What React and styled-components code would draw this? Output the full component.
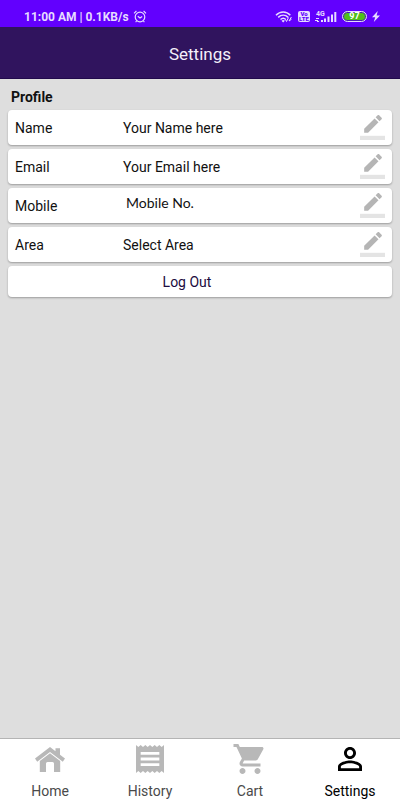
import React from "react";
import styled, { createGlobalStyle } from "styled-components";

const GlobalStyle = createGlobalStyle`
  * {
    box-sizing: border-box;
  }

  body {
    margin: 0;
    background-color: #dedede;
    color: #111111;
    font-family: Roboto, "Liberation Sans", sans-serif;
  }
`;

const Screen = styled.div`
  display: flex;
  flex-direction: column;
  min-height: 100vh;
`;

const StatusBar = styled.div`
  display: flex;
  justify-content: space-between;
  align-items: center;
  height: 27px;
  padding: 6px 20px 0 24px;
  background-color: #6200fe;
  color: #e6dcff;
`;

const StatusGroup = styled.div`
  display: flex;
  align-items: center;
  gap: ${(props) => props.$gap}px;
`;

const Clock = styled.span`
  font-size: 12px;
  font-weight: 700;
  line-height: 16px;
  white-space: pre;
`;

const VolteBadge = styled.span`
  width: 12px;
  height: 11px;
  border-radius: 2px;
  background-color: #e6dcff;
  color: #6200fe;
  font-size: 6px;
  font-weight: 900;
  line-height: 5px;
  text-align: center;
`;

const Battery = styled.span`
  width: 25px;
  height: 11px;
  border: 1px solid #e6dcff;
  border-radius: 6px;
  background-color: #4fbf1a;
  box-shadow: inset 0 0 0 1px #4a1fb0;
  color: #ffffff;
  font-size: 9px;
  font-weight: 700;
  line-height: 9px;
  text-align: center;
`;

const Header = styled.header`
  display: flex;
  align-items: center;
  justify-content: center;
  height: 52px;
  padding-top: 2px;
  background-color: #30145e;
  border-bottom: 1px solid #210a4c;
`;

const Title = styled.h1`
  margin: 0;
  color: #f4f0fa;
  font-size: 17px;
  font-weight: 400;
  line-height: 24px;
`;

const Content = styled.main`
  display: flex;
  flex: 1;
  flex-direction: column;
  gap: 4px;
  padding: 10px 8px;
`;

const SectionTitle = styled.h2`
  margin: 0;
  padding-left: 3px;
  font-size: 14px;
  font-weight: 700;
  line-height: 17px;
`;

const Card = styled.div`
  display: grid;
  grid-template-columns: 108px 1fr 25px;
  align-items: center;
  height: 35px;
  padding: 0 7px;
  border-radius: 4px;
  background-color: #ffffff;
  box-shadow: 0 1px 2px rgba(0, 0, 0, 0.3);
  font-size: 14px;
  line-height: 20px;
`;

const PhoneValue = styled.span`
  align-self: start;
  padding: 5px 3px;
  font-family: Lato, Roboto, sans-serif;
`;

const EditButton = styled.button`
  display: flex;
  padding: 0;
  border: 0;
  background: none;
  color: #b5b5b5;
`;

const LogOutButton = styled.button`
  height: 31px;
  padding: 0 26px 0 0;
  border: 0;
  border-radius: 4px;
  background-color: #ffffff;
  box-shadow: 0 1px 2px rgba(0, 0, 0, 0.3);
  color: #1c0c40;
  font-family: inherit;
  font-size: 14px;
  line-height: 20px;
`;

const BottomNav = styled.nav`
  display: grid;
  grid-template-columns: repeat(4, 1fr);
  height: 62px;
  border-top: 1px solid #b4b4b4;
  background-color: #ffffff;
`;

const NavLink = styled.a`
  display: flex;
  flex-direction: column;
  align-items: center;
  gap: 4px;
  padding-top: 2px;
  color: ${(props) => (props.$active ? "#000000" : "#4a4a4a")};
  font-size: 14px;
  line-height: 20px;
  text-decoration: none;
`;

const NavIcon = styled.span`
  display: flex;
  align-items: center;
  justify-content: center;
  height: 36px;
  color: ${(props) => (props.$active ? "#000000" : "#b8b8b8")};
`;

function AlarmIcon() {
  return (
    <svg width="14" height="13" viewBox="0 0 14 13" fill="none" stroke="currentColor">
      <circle cx="7" cy="7" r="4.8" strokeWidth="1.2" />
      <path d="M4.8 6.2L7 8l2.2-1.5M1 3.4L3.4 1M13 3.4L10.6 1M3.6 11l-1 1.2M10.4 11l1 1.2" strokeWidth="1.1" />
    </svg>
  );
}

function WifiIcon() {
  return (
    <svg width="18" height="12" viewBox="0 0 18 12" fill="none" stroke="currentColor">
      <path d="M1 4.3C5-.2 11.5-.2 15.3 4.3M3.2 6.4c3-3 7-3 10 0M5.5 8.5c1.7-1.6 3.7-1.6 5.3 0" strokeWidth="1.5" />
      <path d="M6.5 9.7Q8.2 8.3 9.9 9.7L8.2 11.4z" fill="currentColor" stroke="none" />
      <path d="M11.5 10.5l2-4M11.5 10.5l-1-2M14 10l2.4-4M14 10l2.5-1.8" strokeWidth="1" />
    </svg>
  );
}

const Signal = styled.svg`
  font-size: 7px;
  font-weight: 700;
`;

function SignalIcon() {
  return (
    <Signal width="22" height="13" viewBox="0 0 22 13" fill="currentColor">
      <text x="1" y="6">4G</text>
      <path d="M1 8h3v1H1zM0 10h3v1H0zM2 11h2v1H2zM6 10h2v2H6zM9 8.5h2V12H9zM12.5 6.5h2V12h-2zM16 4.5h2V12h-2zM19.3 2h2v10h-2z" />
    </Signal>
  );
}

function BoltIcon() {
  return (
    <svg width="8" height="11" viewBox="0 0 8 11" fill="currentColor">
      <path d="M5.8 0L0 6.3h3.2L1.8 11 8 4.4H4.6z" />
    </svg>
  );
}

function PencilIcon() {
  return (
    <svg width="25" height="25" viewBox="0 0 24 24" fill="currentColor">
      <path d="M17.75 7L14 3.25l-10 10V17h3.75l10-10zm2.96-2.96c.39-.39.39-1.02 0-1.41L18.37.29c-.39-.39-1.02-.39-1.41 0L15 2.25 18.75 6l1.96-1.96z" />
      <path fillOpacity=".36" d="M0 20h24v4H0z" />
    </svg>
  );
}

function HomeIcon() {
  return (
    <svg width="30" height="25" viewBox="0 0 30 25" fill="currentColor">
      <path d="M15 0L0 11.6l2.2 3.2L15 5l12.800 9.800 2.200-3.200-5-3.900V1.200h-4.500v3z" />
      <path d="M15 6.200L4.800 14V25h6.200v-8.500q0-1.500 1.500-1.500h5q1.500 0 1.500 1.500V25h6.200V14z" />
    </svg>
  );
}

function ReceiptIcon() {
  return (
    <svg width="28" height="28" viewBox="3 2 18 20" preserveAspectRatio="none" fill="currentColor">
      <path d="M18 17H6v-2h12v2zm0-4H6v-2h12v2zm0-4H6V7h12v2zM3 22l1.5-1.5L6 22l1.5-1.5L9 22l1.5-1.5L12 22l1.5-1.5L15 22l1.5-1.5L18 22l1.5-1.5L21 22V2l-1.5 1.5L18 2l-1.5 1.5L15 2l-1.5 1.5L12 2l-1.5 1.5L9 2 7.5 3.5 6 2 4.5 3.5 3 2v20z" />
    </svg>
  );
}

function CartIcon() {
  return (
    <svg width="36" height="36" viewBox="0 0 24 24" fill="currentColor">
      <path d="M7 18c-1.1 0-1.99.9-1.99 2S5.9 22 7 22s2-.9 2-2-.9-2-2-2zM1 2v2h2l3.6 7.59-1.35 2.45c-.16.28-.25.61-.25.96 0 1.1.9 2 2 2h12v-2H7.42c-.14 0-.25-.11-.25-.25l.03-.12.9-1.63h7.45c.75 0 1.41-.41 1.75-1.03l3.58-6.49c.08-.14.12-.31.12-.48 0-.55-.45-1-1-1H5.21l-.94-2H1zm16 16c-1.1 0-1.99.9-1.99 2s.89 2 1.99 2 2-.9 2-2-.9-2-2-2z" />
    </svg>
  );
}

function PersonIcon() {
  return (
    <svg width="36" height="36" viewBox="0 0 24 24" fill="currentColor">
      <path d="M12 5.9c1.16 0 2.1.94 2.1 2.1s-.94 2.1-2.1 2.1S9.9 9.16 9.9 8s.94-2.1 2.1-2.1m0 9c2.97 0 6.1 1.46 6.1 2.1v1.1H5.9V17c0-.64 3.13-2.1 6.1-2.1M12 4C9.79 4 8 5.79 8 8s1.79 4 4 4 4-1.79 4-4-1.79-4-4-4zm0 9c-2.67 0-8 1.34-8 4v3h16v-3c0-2.66-5.33-4-8-4z" />
    </svg>
  );
}

const fields = [
  { label: "Name", value: "Your Name here" },
  { label: "Email", value: "Your Email here" },
  { label: "Mobile", value: "Mobile No.", phone: true },
  { label: "Area", value: "Select Area" },
];

const tabs = [
  { label: "Home", icon: HomeIcon },
  { label: "History", icon: ReceiptIcon },
  { label: "Cart", icon: CartIcon },
  { label: "Settings", icon: PersonIcon, active: true },
];

export default function App() {
  return (
    <Screen>
      <GlobalStyle />
      <StatusBar>
        <StatusGroup $gap={4}>
          <Clock>11:00 AM | 0.1KB/s</Clock>
          <AlarmIcon />
        </StatusGroup>
        <StatusGroup $gap={5}>
          <WifiIcon />
          <VolteBadge>Vo LTE</VolteBadge>
          <SignalIcon />
          <Battery>97</Battery>
          <BoltIcon />
        </StatusGroup>
      </StatusBar>
      <Header>
        <Title>Settings</Title>
      </Header>
      <Content>
        <SectionTitle>Profile</SectionTitle>
        {fields.map(({ label, value, phone }) => (
          <Card key={label}>
            <span>{label}</span>
            {phone ? <PhoneValue>{value}</PhoneValue> : <span>{value}</span>}
            <EditButton type="button" aria-label={`Edit ${label}`}>
              <PencilIcon />
            </EditButton>
          </Card>
        ))}
        <LogOutButton type="button">Log Out</LogOutButton>
      </Content>
      <BottomNav>
        {tabs.map(({ label, icon: Icon, active }) => (
          <NavLink key={label} href={`#${label.toLowerCase()}`} $active={active}>
            <NavIcon $active={active}>
              <Icon />
            </NavIcon>
            {label}
          </NavLink>
        ))}
      </BottomNav>
    </Screen>
  );
}
